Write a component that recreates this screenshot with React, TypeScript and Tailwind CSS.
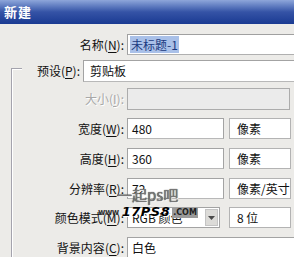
// App.tsx
const cjk = "font-['Noto_Sans_CJK_SC','Noto_Sans',sans-serif]";

function Label({ text, k, className = "" }: { text: string; k: string; className?: string }) {
  return (
    <div className={`shrink-0 text-right pr-[3px] leading-[21px] whitespace-nowrap ${className}`}>
      {text}(<span className="underline underline-offset-2">{k}</span>):
    </div>
  );
}

function Field({ value, className = "" }: { value: string; className?: string }) {
  return (
    <div
      className={`shrink-0 h-full bg-white border border-[#a3a3a3] border-b-[#b8b8b8] pl-[4px] leading-[19px] whitespace-nowrap ${className}`}
    >
      {value}
    </div>
  );
}

function Unit({ value, className = "" }: { value: string; className?: string }) {
  return (
    <div
      className={`shrink-0 w-[62px] h-full bg-white border border-[#b3b3b3] pl-[7px] leading-[19px] whitespace-nowrap ${className}`}
    >
      {value}
    </div>
  );
}

export default function App() {
  return (
    <div className={`relative w-[294px] h-[257px] overflow-hidden bg-[#ecebe8] text-[12px] text-[#111111] ${cjk}`}>
      {/* title bar */}
      <div className="h-[24px] bg-gradient-to-b from-[#8ea6da] via-[#3553a6] to-[#1a3a92] flex items-center pl-[4px] text-white font-bold text-[13px] tracking-[1px]">
        新建
      </div>

      {/* name */}
      <div className="mt-[10px] flex h-[21px]">
        <Label text="名称" k="N" className="w-[127px] pr-[3px]" />
        <div className="shrink-0 w-[200px] h-full bg-white border border-[#a0a0a0] border-b-[#b0b0b0] pl-[2px] flex items-center">
          <span className="bg-[#a9c0e8] text-[#1b3a80] px-[1px] leading-[17px]">未标题-1</span>
        </div>
      </div>

      {/* preset, sits on the group box line */}
      <div className="relative z-10 mt-[5px] ml-[22px] flex h-[22px]">
        <div className="w-[61px] bg-[#ecebe8]">
          <Label text="预设" k="P" className="w-[61px] leading-[22px]" />
        </div>
        <Field value="剪贴板" className="w-[220px] pl-[6px] leading-[20px]" />
      </div>

      {/* group box */}
      <div className="-mt-[14px] ml-[11px] h-[220px] border-l border-t border-[#a4a3ad] shadow-[inset_1px_1px_0_#ffffff]">
        <div className="mt-[19px] flex h-[22px]">
          <Label text="大小" k="I" className="w-[115px] text-[#a8a8a8] [text-shadow:1px_1px_0_#ffffff] leading-[22px]" />
          <div className="shrink-0 w-[163px] h-full bg-[#ebebeb] border border-[#acacac]" />
        </div>

        <div className="mt-[8px] flex h-[21px]">
          <Label text="宽度" k="W" className="w-[115px]" />
          <Field value="480" className="w-[97px]" />
          <Unit value="像素" className="ml-[5px]" />
        </div>

        <div className="mt-[9px] flex h-[21px]">
          <Label text="高度" k="H" className="w-[115px]" />
          <Field value="360" className="w-[97px]" />
          <Unit value="像素" className="ml-[5px]" />
        </div>

        <div className="mt-[9px] flex h-[21px]">
          <Label text="分辨率" k="R" className="w-[115px]" />
          <Field value="72" className="w-[97px]" />
          <Unit value="像素/英寸" className="ml-[5px]" />
        </div>

        <div className="mt-[8px] flex h-[21px]">
          <Label text="颜色模式" k="M" className="w-[115px]" />
          <div className="shrink-0 w-[93px] h-full bg-white border border-[#a3a3a3] flex">
            <div className="flex-1 pl-[4px] leading-[19px] whitespace-nowrap">RGB 颜色</div>
            <div className="w-[13px] my-[1px] mr-[1px] bg-[#dcdbd8] border border-[#c4c4c4] flex items-center justify-center">
              <svg width="7" height="4" viewBox="0 0 7 4">
                <path d="M0 0h7L3.5 4z" fill="#4a4a4a" />
              </svg>
            </div>
          </div>
          <Unit value="8 位" className="ml-[9px]" />
        </div>

        <div className="mt-[9px] flex h-[21px]">
          <Label text="背景内容" k="C" className="w-[115px]" />
          <Field value="白色" className="w-[200px]" />
        </div>
      </div>

      {/* watermark */}
      <div className="absolute left-[117px] top-[186px] text-[15px] leading-[18px] text-[#777777] [text-shadow:0_0_1px_#222,1px_1px_0_#ffffff] whitespace-nowrap">
        一起ps吧
      </div>
      <div className="absolute left-[98px] top-[205px] flex items-end whitespace-nowrap font-['DejaVu_Sans',sans-serif]">
        <span className="text-[8px] leading-[10px] font-bold text-[#333333] tracking-[-0.5px] mr-[3px]">www</span>
        <span className="text-[13px] leading-[13px] font-black italic text-black tracking-[0.5px] [text-shadow:1px_1px_0_#ffffff]">17PS8</span>
        <span className="text-[8px] leading-[10px] font-bold text-[#222222] bg-[#9a9a9a] px-[1px] ml-[2px]">.COM</span>
      </div>
    </div>
  );
}
